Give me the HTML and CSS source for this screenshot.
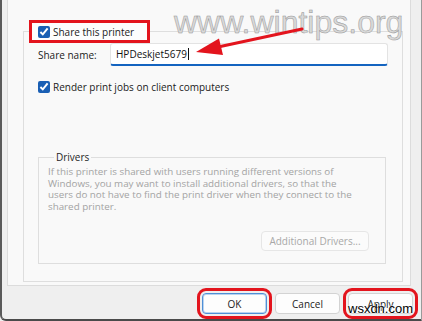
FILE: index.html
```html
<!DOCTYPE html>
<html lang="en">
<head>
    <meta charset="UTF-8">
    <meta name="viewport" content="width=device-width, initial-scale=1.0">
    <title>Printer Sharing</title>
    <link rel="stylesheet" href="styles.css">
</head>
<body>
    <div class="window">
        <!-- Sharing tab -->
        <div class="tab-panel">
            <fieldset class="sharing">
                <legend class="share-toggle">
                    <label class="check"><input type="checkbox" checked> Share this printer</label>
                </legend>

                <div class="field-row">
                    <label class="field-label">Share name:</label>
                    <div class="text-input"><span>HPDeskjet5679</span><span class="caret"></span></div>
                </div>

                <label class="check render-row"><input type="checkbox" checked> Render print jobs on client computers</label>

                <fieldset class="drivers">
                    <legend>Drivers</legend>
                    <p class="drivers-text">If this printer is shared with users running different versions of<br>Windows, you may want to install additional drivers, so that the<br>users do not have to find the print driver when they connect to the<br>shared printer.</p>
                    <div class="drivers-actions">
                        <button class="btn" disabled>Additional Drivers...</button>
                    </div>
                </fieldset>
            </fieldset>
        </div>

        <!-- Dialog buttons -->
        <div class="dialog-buttons">
            <button class="btn default marked">OK</button>
            <button class="btn">Cancel</button>
            <button class="btn marked">Apply</button>
        </div>

        <!-- Annotations -->
        <div class="watermark-top">www.wintips.org</div>
        <div class="watermark-bottom">wsxdn.com</div>
        <svg class="callout-arrow" width="422" height="321" viewBox="0 0 422 321">
            <line x1="302" y1="29" x2="218" y2="47" stroke="#e3141d" stroke-width="3" stroke-linecap="round"/>
            <polygon points="196,52 219,38.5 223,55" fill="#e3141d"/>
        </svg>
    </div>
</body>
</html>
```

FILE: styles.css
```css
/* General */
* {
    margin: 0;
    padding: 0;
    box-sizing: border-box;
}

body {
    width: 422px;
    height: 321px;
    overflow: hidden;
    background: #f0f0f0;
    font-family: "Open Sans", "Noto Sans", sans-serif;
    font-size: 10px;
    color: #1b1b1b;
}

.window {
    position: relative;
    display: flex;
    flex-direction: column;
    width: 422px;
    height: 321px;
    background: #efefef;
    border-left: 2px solid #5a5a5a;
    border-right: 1px solid #9a9a9a;
    border-bottom: 2px solid #4a4a4a;
    border-bottom-left-radius: 6px;
}

/* Tab page */
.tab-panel {
    height: 286px;
    margin: 0 10px 0 5px;
    padding: 0 7px 0 15px;
    background: #f9f9f9;
    border: 1px solid #dcdcdc;
    border-top: none;
}

fieldset {
    border: 1px solid #dedede;
    min-width: 0;
}

.sharing {
    height: 262px;
    margin-top: 20px;
    padding: 0;
}

.share-toggle {
    margin-left: 5px;
    padding: 2px 13px 2px 6px;
    border: 3px solid #e3141d;
    background: #fdfdfd;
}

.check {
    display: flex;
    align-items: center;
    gap: 3px;
    height: 13px;
    white-space: nowrap;
}

.check input {
    width: 12px;
    height: 12px;
    margin: 0;
    accent-color: #1a5fb4;
}

/* Share name */
.field-row {
    display: flex;
    align-items: center;
    padding-left: 14px;
    margin-right: 14px;
}

.field-label {
    width: 72px;
}

.text-input {
    flex: 1;
    display: flex;
    align-items: center;
    height: 23px;
    padding: 0 5px 1px;
    background: #fff;
    border: 1px solid #e3e3e3;
    border-bottom: 2px solid #1464c0;
    border-radius: 3px;
    color: #111;
}

.caret {
    display: inline-block;
    width: 1px;
    height: 12px;
    margin-left: 1px;
    background: #111;
}

.render-row {
    margin: 14px 0 0 14px;
}

/* Drivers group */
.drivers {
    height: 114px;
    margin: 57px 16px 0 14px;
    padding: 0 0 0 9px;
}

.drivers legend {
    margin-left: 6px;
    padding: 0 2px;
    line-height: 14px;
    color: #262626;
}

.drivers-text {
    margin-top: 2px;
    font-size: 9.8px;
    line-height: 11.6px;
    white-space: nowrap;
    color: #a3a3a3;
}

.drivers-actions {
    display: flex;
    justify-content: flex-end;
    margin: 19px 16px 0 0;
}

/* Buttons */
.btn {
    height: 21px;
    width: 65px;
    font-family: inherit;
    font-size: 10px;
    color: #1b1b1b;
    background: #fdfdfd;
    border: 1px solid #d3d3d3;
    border-radius: 4px;
}

.btn:disabled {
    width: 108px;
    height: 20px;
    color: #a8a8a8;
    background: #fbfbfb;
    border-color: #e6e6e6;
}

.btn.default {
    border: 1px solid #4f8fd6;
    box-shadow: inset 0 0 0 1px #b9d3f0;
}

.btn.marked {
    outline: 3px solid #e3141d;
    outline-offset: 2px;
}

.dialog-buttons {
    display: flex;
    justify-content: flex-end;
    gap: 8px;
    padding: 7px 8px 0 0;
}

/* Annotations */
.watermark-top {
    position: absolute;
    top: 6px;
    left: 172px;
    font-family: "Liberation Sans", Arial, sans-serif;
    font-size: 32px;
    line-height: 32px;
    color: #d9d9d9;
    -webkit-text-stroke: 0.5px #969696;
}

.watermark-bottom {
    position: absolute;
    top: 302px;
    left: 346px;
    font-family: "Liberation Sans", Arial, sans-serif;
    font-size: 13px;
    line-height: 14px;
    color: #000;
    text-shadow: 0 0 2px #fff, 0 0 2px #fff;
}

.callout-arrow {
    position: absolute;
    top: 0;
    left: -2px;
    pointer-events: none;
}
```
